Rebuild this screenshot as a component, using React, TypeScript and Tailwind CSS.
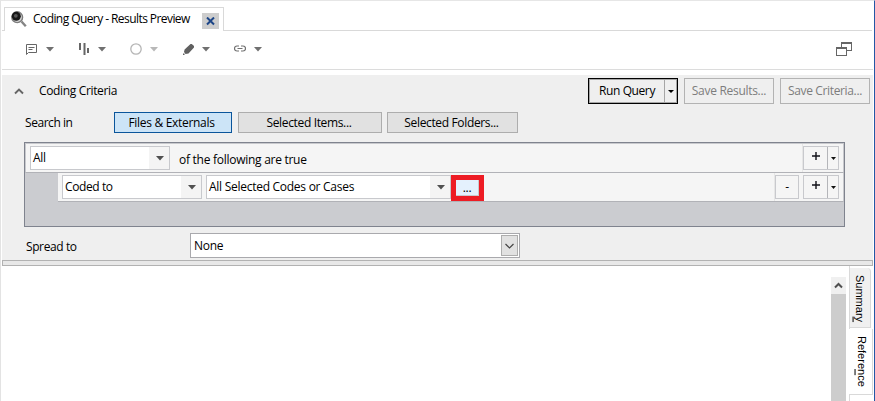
import React from "react";

function Caret({ className = "text-[#505050]" }: { className?: string }) {
  return (
    <svg width="8" height="5" viewBox="0 0 8 5" className={className}>
      <path d="M0 0h8L4 4.5z" fill="currentColor" />
    </svg>
  );
}

function Tool({ children, muted = false }: { children: React.ReactNode; muted?: boolean }) {
  return (
    <div className="flex w-[52px] items-center">
      <div className="flex w-5 items-center">{children}</div>
      <Caret className={muted ? "text-[#b8b8b8]" : "text-[#707070]"} />
    </div>
  );
}

function Combo({ text, className }: { text: string; className: string }) {
  return (
    <div className={`flex h-6 border border-[#c8c9cd] bg-white ${className}`}>
      <span className="flex-1 pl-0.5 leading-[21px]">{text}</span>
      <span className="flex w-5 items-center justify-center bg-[#f4f4f4] pl-0.5">
        <Caret />
      </span>
    </div>
  );
}

function AddButton() {
  return (
    <div className="flex h-6 w-9 border border-[#c8c9cd] bg-[#f5f5f5]">
      <span className="flex w-6 items-center justify-center border-r border-[#b4b5b9]">
        <svg width="9" height="9" viewBox="0 0 9 9" className="mb-1 ml-0.5">
          <path d="M4 0v8M0 4h8" stroke="#101018" strokeWidth="1.4" />
        </svg>
      </span>
      <span className="flex flex-1 items-center justify-center">
        <svg width="5" height="3" viewBox="0 0 5 3">
          <path d="M0 0h5L2.5 3z" fill="#111" />
        </svg>
      </span>
    </div>
  );
}

export default function App() {
  return (
    <div className="flex h-[401px] w-[875px] overflow-hidden border-t border-r border-l border-t-[#e6e6e6] border-r-[#2357a5] border-l-[#e3e3e3] bg-white font-['Open_Sans',sans-serif] text-[12px] leading-4 tracking-[-0.27px] whitespace-nowrap text-black">
      <div className="flex w-[872px] flex-col pl-px">
        <div className="flex h-[30px] items-end">
          <div className="h-px w-0.5 bg-[#d9d9d9]" />
          <div className="flex h-6 w-[220px] items-start border-t border-r border-l border-[#d9d9d9]">
            <svg width="17" height="17" viewBox="0 0 17 17" className="mt-[3px] ml-[6px]">
              <path d="M10.5 10.5l4.3 4.7" stroke="#858585" strokeWidth="2.4" />
              <circle cx="6.2" cy="6.2" r="5.4" fill="#d5d5d5" stroke="#7d7d7d" strokeWidth="1.4" />
              <circle cx="5.3" cy="5.3" r="4.5" fill="#161616" />
              <circle cx="4.8" cy="4.8" r="1.9" fill="#555" />
            </svg>
            <span className="mt-[3px] ml-[5px] w-[169px] tracking-[-0.57px]">Coding Query - Results Preview</span>
            <span className="mt-[5px] flex h-4 w-[17px] items-center justify-center bg-[#cdcdcd]">
              <svg width="9" height="9" viewBox="0 0 9 9">
                <path d="M1 .5l7 7M8 .5l-7 7" stroke="#1c4587" strokeWidth="2" />
              </svg>
            </span>
          </div>
          <div className="mr-px h-px flex-1 bg-[#d9d9d9]" />
        </div>

        <div className="flex h-[39px] items-center border-b border-[#dcdcdc] pr-[21px] pb-0.5 pl-[24px]">
          <Tool>
            <svg width="11" height="11" viewBox="0 0 11 11" fill="none" stroke="#666">
              <path d="M.5 10.5V.5h10v8h-8zM2.5 3.5h6M2.5 5.5h4" />
            </svg>
          </Tool>
          <Tool>
            <svg width="10" height="12" viewBox="0 0 10 12" fill="#666" className="ml-px">
              <path d="M0 0h2v7H0zM4.5 0h2v12h-2zM8 5h2v5H8z" />
            </svg>
          </Tool>
          <Tool muted>
            <svg width="12" height="12" viewBox="0 0 12 12" fill="none">
              <circle cx="6" cy="6" r="5.2" stroke="#b5b5b5" strokeWidth="1.3" />
            </svg>
          </Tool>
          <Tool>
            <svg width="11" height="11" viewBox="0 0 11 11" fill="#606060" className="ml-px">
              <path d="M7.5 0h1.3L11 2v1.5l-5.5 6-3 .5L1 8l.6-2.5zM0 9.5h1.5V11H0z" />
            </svg>
          </Tool>
          <Tool>
            <svg width="12" height="8" viewBox="0 0 12 8" fill="none" stroke="#707070" strokeWidth="1.2">
              <path d="M5 1H3a2.4 2.4 0 000 5h2M7 1h2a2.4 2.4 0 010 5H7M3.5 3.5h5" />
            </svg>
          </Tool>
          <svg width="16" height="14" viewBox="0 0 16 14" className="ml-auto" fill="#666">
            <path d="M5 0h11v9h-5V8h4V2H6v3H5zM0 5h11v9H0zM1 7v6h9V7z" fillRule="evenodd" />
          </svg>
        </div>

        <div className="mt-[5px] h-[185px] bg-[#efefef]">
          <div className="flex h-[37px] items-center pt-[3px] pr-px pb-2">
            <svg width="10" height="7" viewBox="0 0 10 7" className="ml-3" fill="none">
              <path d="M1 5.5l4-4 4 4" stroke="#666" strokeWidth="1.9" />
            </svg>
            <span className="ml-[15px] tracking-[-0.35px]">Coding Criteria</span>
            <div className="ml-auto flex gap-1.5 pr-0.5">
              <div className="flex h-[26px] w-[90px] border border-black bg-[#efefef]">
                <span className="flex w-[76px] items-center justify-center border border-[#a6a6a6] tracking-[-0.4px]">Run Query</span>
                <span className="flex flex-1 items-center justify-center border border-l-0 border-[#a6a6a6]">
                  <svg width="6" height="3" viewBox="0 0 6 3">
                    <path d="M0 0h6L3 3z" />
                  </svg>
                </span>
              </div>
              <div className="flex h-[26px] w-[90px] items-center justify-center border border-[#b3b3b3] text-[#7d7d7d] tracking-[-0.3px]">Save Results...</div>
              <div className="flex h-[26px] w-[90px] items-center justify-center border border-[#b3b3b3] text-[#7d7d7d] tracking-[-0.35px]">Save Criteria...</div>
            </div>
          </div>

          <div className="flex h-[21px] items-center pl-[23px]">
            <span className="w-[89px] tracking-[-0.45px]">Search in</span>
            <div className="flex h-[21px] w-[118px] items-center justify-center border border-[#0a559b] bg-[#cce4f7] pr-[3px] tracking-[-0.3px]">Files &amp; Externals</div>
            <div className="ml-1.5 flex h-[21px] w-[144px] items-center justify-center border border-[#adadad] bg-[#e1e1e1] pr-0.5 tracking-[-0.35px]">Selected Items...</div>
            <div className="ml-[5px] flex h-[21px] w-[131px] items-center justify-center border border-[#adadad] bg-[#e1e1e1] pr-0.5 tracking-[-0.35px]">Selected Folders...</div>
          </div>

          <div className="mt-[9px] ml-[22px] h-[85px] w-[821px] border border-[#7f838e] bg-[#cbccd0]">
            <div className="flex h-[30px] items-center border-t border-r border-b border-l border-t-[#c8c9cd] border-r-[#c8c9cd] border-b-[#b1b2b7] border-l-[#c8c9cd] bg-[#f5f5f5] pr-1 pl-1">
              <Combo text="All" className="w-[140px]" />
              <span className="ml-[9px] pt-[3px]">of the following are true</span>
              <div className="ml-auto flex h-7 items-center border-l border-[#e6e6e6]">
                <AddButton />
              </div>
            </div>
            <div className="ml-[33px] flex h-[29px] items-center border-r border-b border-r-[#c8c9cd] border-b-[#b1b2b7] bg-[#f5f5f5] pr-1 pl-1">
              <Combo text="Coded to" className="w-[140px] tracking-[-0.4px]" />
              <Combo text="All Selected Codes or Cases" className="ml-1 w-[245px]" />
              <div className="mt-0.5 h-[26px] w-[33px] border-[5px] border-[#ed1c24]">
                <div className="flex h-4 items-center justify-center border-r border-b border-[#c8c9cd] bg-[#e4f1fd] pt-px">...</div>
              </div>
              <div className="ml-auto flex h-7 items-center gap-1 border-l border-[#e6e6e6]">
                <div className="flex h-6 w-6 items-center justify-center border border-[#c8c9cd]">-</div>
                <AddButton />
              </div>
            </div>
          </div>

          <div className="mt-1.5 flex h-[25px] items-center pl-[24px]">
            <span className="w-[164px] pt-[3px] tracking-[-0.4px]">Spread to</span>
            <div className="flex h-[25px] w-[330px] items-center border border-[#a9a9ad] bg-white p-px">
              <span className="flex-1 pt-px pl-0.5">None</span>
              <span className="flex h-[21px] w-[17px] items-center justify-center border border-[#adadad] bg-[#e1e1e1]">
                <svg width="9" height="6" viewBox="0 0 9 6" fill="none">
                  <path d="M.5 1l4 4 4-4" stroke="#444" strokeWidth="1.2" />
                </svg>
              </span>
            </div>
          </div>
        </div>

        <div className="h-1.5 w-[871px] shrink-0 border border-[#b2b2b2] bg-[#e8e8e8]" />

        <div className="flex h-[135px]">
          <div className="flex-1" />
          <div className="mt-[11px] w-[15px] bg-[#cdcdcd]">
            <div className="flex h-[17px] items-center justify-center bg-[#f0f0f0]">
              <svg width="9" height="7" viewBox="0 0 9 7" fill="none">
                <path d="M1 5.5L4.5 2 8 5.5" stroke="#505050" strokeWidth="2" />
              </svg>
            </div>
          </div>
          <div className="ml-[3px] w-6 border-l border-[#d9d9d9] pt-0.5 font-['Liberation_Sans',sans-serif] text-[11px] tracking-normal">
            <div className="flex h-[60px] w-[21px] items-center justify-center rounded-tr border-r border-b border-[#d9d9d9] bg-[#f0f0f0] pt-0.5 [writing-mode:vertical-rl]">
              <span>Summar<u>y</u></span>
            </div>
            <div className="mt-px -ml-px flex h-[66px] w-6 items-center justify-center border-r border-b border-[#d9d9d9] bg-white pl-0.5 [writing-mode:vertical-rl]">
              <span>Refere<u>n</u>ce</span>
            </div>
          </div>
        </div>
      </div>
    </div>
  );
}
